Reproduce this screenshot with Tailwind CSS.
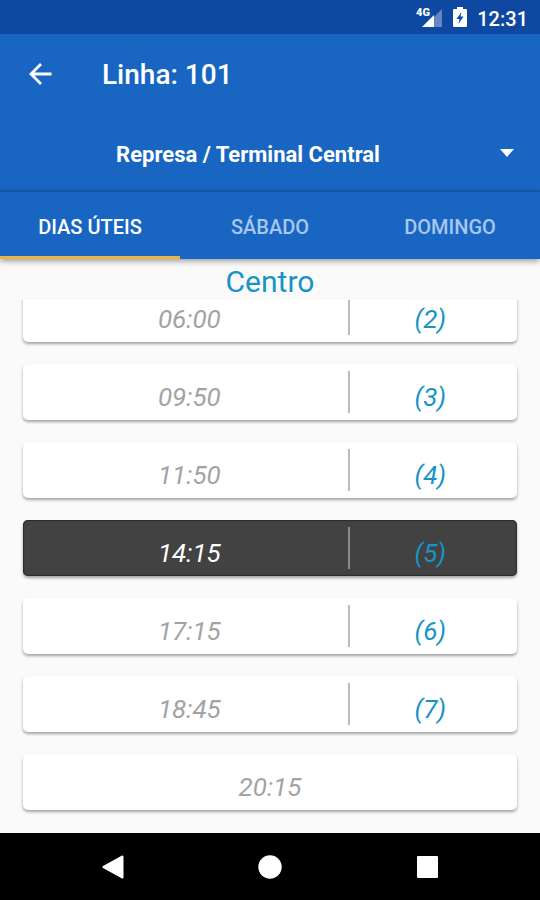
<!DOCTYPE html>
<html lang="pt-BR">

<head>
    <meta charset="UTF-8" />
    <meta name="viewport" content="width=device-width, initial-scale=1.0" />
    <title>Linha: 101</title>
    <script src="https://cdn.jsdelivr.net/npm/@tailwindcss/browser@4"></script>
</head>

<body class="flex flex-col h-screen overflow-hidden bg-[#fafafa] font-[Roboto,sans-serif]">

    <!-- Status bar -->
    <div class="flex shrink-0 items-center justify-end h-[34px] pr-3 pt-1 bg-[#0f48a1] text-white">
        <svg class="w-[28px] h-[24px]" viewBox="0 0 28 24" fill="currentColor" aria-hidden="true">
            <path d="M27 2v18h-8V10z" opacity=".35" />
            <path d="M19 8v12H7z" />
            <text x="1" y="9" font-size="11" font-weight="900">4G</text>
        </svg>
        <svg class="w-[14px] h-[24px] ml-[10px]" viewBox="0 0 14 24" fill="currentColor" aria-hidden="true">
            <path fill-rule="evenodd"
                d="M4 0h6v2h3q1 0 1 1v16q0 1-1 1H1q-1 0-1-1V3q0-1 1-1h3zM8.500 5L3.500 12h3L5.500 17l5-7.500h-3z" />
        </svg>
        <span class="ml-[10px] text-[20px] leading-6 font-medium">12:31</span>
    </div>

    <!-- App bar -->
    <header class="shrink-0 bg-[#1866c1] text-white border-b-2 border-[#155bad]">
        <div class="flex items-center h-[82px] pl-7">
            <button type="button" class="w-6 h-6 mb-[2px]" aria-label="Voltar">
                <svg viewBox="0 0 24 24" fill="none" stroke="currentColor" stroke-width="2.800">
                    <path d="M23.500 12H3M13 2L3 12l10 10" />
                </svg>
            </button>
            <h1 class="ml-[50px] text-[28px] leading-8 font-medium">Linha: 101</h1>
        </div>
        <div class="relative h-[74px]">
            <select aria-label="Itinerário"
                class="appearance-none w-full h-full pt-[2px] pr-11 text-[22px] font-bold text-white [text-align-last:center] focus:outline-none">
                <option>Represa / Terminal Central</option>
            </select>
            <svg class="absolute right-[26px] top-[33px] w-[14px] h-2 pointer-events-none" viewBox="0 0 14 8"
                fill="currentColor" aria-hidden="true">
                <path d="M0 0h14L7 8z" />
            </svg>
        </div>
    </header>

    <!-- Tabs -->
    <nav
        class="relative z-10 grid shrink-0 grid-cols-3 h-[67px] bg-[#1866c1] text-[20px] font-medium text-[#a8c6f0] shadow-[0_2px_6px_rgba(0,0,0,0.4)]">
        <button type="button" class="pt-[5px] border-b-3 border-[#e8b54b] text-white">DIAS ÚTEIS</button>
        <button type="button" class="pt-[5px] border-b-3 border-transparent">SÁBADO</button>
        <button type="button" class="pt-[5px] border-b-3 border-transparent">DOMINGO</button>
    </nav>

    <!-- Timetable, scrolled to the end -->
    <main class="flex flex-col flex-1 min-h-0">
        <h2 class="shrink-0 pt-[5px] h-[41px] text-center text-[30px] leading-9 text-[#1893c6]">Centro</h2>
        <ul
            class="flex flex-col flex-1 justify-end gap-[22px] min-h-0 overflow-hidden px-[23px] pb-[23px] text-[26px] leading-8 italic text-[#a3a3a3] text-center">
            <li
                class="grid shrink-0 grid-cols-[2fr_1fr] h-14 px-2 py-[7px] bg-white rounded-[5px] shadow-[0_2px_3px_rgba(0,0,0,0.35)]">
                <span class="pt-[10px] border-r-2 border-[#bcbcbc]">06:00</span>
                <span class="pt-[10px] pl-[2px] text-[#1893c6]">(2)</span>
            </li>
            <li
                class="grid shrink-0 grid-cols-[2fr_1fr] h-14 px-2 py-[7px] bg-white rounded-[5px] shadow-[0_2px_3px_rgba(0,0,0,0.35)]">
                <span class="pt-[10px] border-r-2 border-[#bcbcbc]">09:50</span>
                <span class="pt-[10px] pl-[2px] text-[#1893c6]">(3)</span>
            </li>
            <li
                class="grid shrink-0 grid-cols-[2fr_1fr] h-14 px-2 py-[7px] bg-white rounded-[5px] shadow-[0_2px_3px_rgba(0,0,0,0.35)]">
                <span class="pt-[10px] border-r-2 border-[#bcbcbc]">11:50</span>
                <span class="pt-[10px] pl-[2px] text-[#1893c6]">(4)</span>
            </li>
            <li
                class="grid shrink-0 grid-cols-[2fr_1fr] h-14 px-2 py-[7px] bg-[#424242] rounded-[5px] shadow-[inset_0_0_1px_1px_#2c2c2c,0_2px_3px_rgba(0,0,0,0.35)]">
                <span class="pt-[10px] border-r-2 border-[#8c8c8c] text-white">14:15</span>
                <span class="pt-[10px] pl-[2px] text-[#1893c6]">(5)</span>
            </li>
            <li
                class="grid shrink-0 grid-cols-[2fr_1fr] h-14 px-2 py-[7px] bg-white rounded-[5px] shadow-[0_2px_3px_rgba(0,0,0,0.35)]">
                <span class="pt-[10px] border-r-2 border-[#bcbcbc]">17:15</span>
                <span class="pt-[10px] pl-[2px] text-[#1893c6]">(6)</span>
            </li>
            <li
                class="grid shrink-0 grid-cols-[2fr_1fr] h-14 px-2 py-[7px] bg-white rounded-[5px] shadow-[0_2px_3px_rgba(0,0,0,0.35)]">
                <span class="pt-[10px] border-r-2 border-[#bcbcbc]">18:45</span>
                <span class="pt-[10px] pl-[2px] text-[#1893c6]">(7)</span>
            </li>
            <li class="grid shrink-0 h-14 px-2 py-[7px] bg-white rounded-[5px] shadow-[0_2px_3px_rgba(0,0,0,0.35)]">
                <span class="pt-[10px]">20:15</span>
            </li>
        </ul>
    </main>

    <!-- System navigation -->
    <footer class="flex shrink-0 items-center justify-center gap-[133px] h-[67px] bg-black text-white">
        <button type="button" class="w-6 h-6" aria-label="Voltar">
            <svg viewBox="0 0 24 24" fill="currentColor">
                <path d="M21 .500Q22.500 0 22.500 2v20q0 2-1.500 1.500L2 13q-1.500-1 0-2z" />
            </svg>
        </button>
        <button type="button" class="w-6 h-6" aria-label="Início">
            <svg viewBox="0 0 24 24" fill="currentColor">
                <circle cx="12" cy="12" r="11.700" />
            </svg>
        </button>
        <button type="button" class="w-6 h-6" aria-label="Recentes">
            <svg viewBox="0 0 24 24" fill="currentColor">
                <rect x="2" y="1" width="21" height="22" rx="1" />
            </svg>
        </button>
    </footer>
</body>

</html>
